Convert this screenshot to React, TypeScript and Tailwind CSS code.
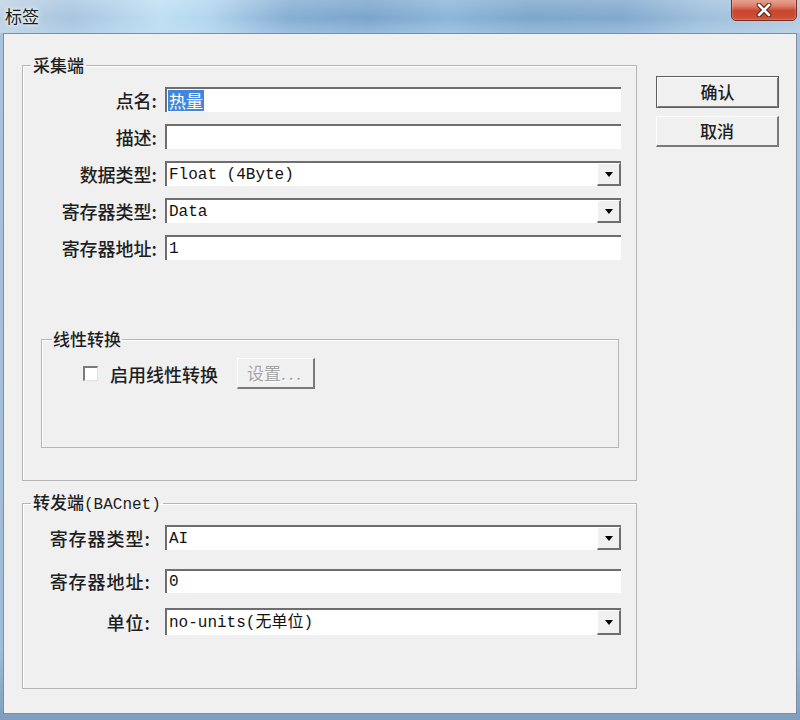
import React from "react";

const CJK = "font-['Noto_Sans_CJK_SC',sans-serif]";
const MONO = "font-['Liberation_Mono','Noto_Sans_CJK_SC',monospace]";

function Box({
  text,
  sel,
  drop,
}: {
  text?: string;
  sel?: string;
  drop?: boolean;
}) {
  return (
    <div className="flex h-full w-[456px] items-stretch border-t-2 border-l-2 border-t-[#6e6e6e] border-l-[#6e6e6e] bg-white">
      <div className={`flex flex-1 items-center pl-[1px] text-[16px] text-[#111] ${MONO}`}>
        {sel ? (
          <span className={`bg-[#3f86dc] px-[1px] text-[17px] leading-[21px] text-white ${CJK}`}>{sel}</span>
        ) : (
          <span className="pl-[1px]">{text}</span>
        )}
      </div>
      {drop && (
        <div className="flex w-[24px] items-center justify-center border-t border-l border-r-2 border-b-2 border-t-white border-l-white border-r-[#6e6e6e] border-b-[#6e6e6e] bg-[#f0f0f0]">
          <div className="h-0 w-0 border-x-[4px] border-t-[5px] border-x-transparent border-t-black" />
        </div>
      )}
    </div>
  );
}

function Row({
  label,
  h = "h-[25px]",
  extra = "",
  children,
}: {
  label: string;
  h?: string;
  extra?: string;
  children: React.ReactNode;
}) {
  return (
    <div className={`flex items-center ${h} ${extra}`}>
      <div className={`w-[134px] text-right text-[18px] font-medium leading-none text-[#1e1e1e] ${CJK}`}>{label}</div>
      <div className="ml-[8px] h-full">{children}</div>
    </div>
  );
}

function Row2({
  label,
  h = "h-[25px]",
  extra = "",
  children,
}: {
  label: string;
  h?: string;
  extra?: string;
  children: React.ReactNode;
}) {
  return (
    <div className={`flex items-center ${h} ${extra}`}>
      <div className={`w-[134px] pr-[6px] text-right text-[18px] font-medium leading-none tracking-[1px] text-[#1e1e1e] ${CJK}`}>{label}</div>
      <div className="ml-[8px] h-full">{children}</div>
    </div>
  );
}

export default function App() {
  return (
    <div className={`relative flex h-[720px] w-[800px] flex-col overflow-hidden bg-[linear-gradient(180deg,#a9c4dc_0%,#9fbcd8_90%,#7f9dbd_100%)] ${CJK}`}>
      {/* title bar */}
      <div className="relative h-[33px] shrink-0 bg-[linear-gradient(180deg,rgba(255,255,255,0.18)_0%,rgba(255,255,255,0)_55%,rgba(200,225,245,0.35)_100%),linear-gradient(90deg,#bfd2e3_0%,#a7c6e0_9%,#bfdff3_20%,#b3d6ee_26%,#86aed3_36%,#7ba5cc_46%,#8db5d8_56%,#7ea6cb_66%,#82a9ce_78%,#9fc0dc_88%,#b3cbe0_100%)]">
        <div className="pl-[5px] pt-[5px] text-[17px] leading-[22px] text-[#1a1a1a] [text-shadow:0_0_6px_#ffffff,0_0_3px_#ffffff]">
          标签
        </div>
        <div className="absolute right-[3px] top-[-4px] flex h-[25px] w-[66px] items-center justify-center rounded-b-[5px] border border-[#7a2e22] bg-[linear-gradient(180deg,#eab3a4_0%,#dc7d68_40%,#c9442c_60%,#d0533a_100%)] shadow-[inset_0_0_2px_rgba(255,255,255,0.6)]">
          <svg width="16" height="14" viewBox="0 0 16 14" className="mt-[2px]">
            <path d="M3 2 L13 12 M13 2 L3 12" stroke="#5a2118" strokeWidth="4.6" strokeLinecap="round" />
            <path d="M3 2 L13 12 M13 2 L3 12" stroke="#ffffff" strokeWidth="2.6" strokeLinecap="round" />
          </svg>
        </div>
      </div>

      {/* client area */}
      <div className="mx-[3px] flex h-[681px] shrink-0 border border-[#7c8ea2] bg-[#f0f0f0] pl-[18px]">
        {/* left column */}
        <div className="flex w-[615px] flex-col">
          {/* 采集端 */}
          <fieldset className="mt-[22px] h-[425px] border border-[#b5b5b5] p-0 shadow-[inset_1px_1px_0_#ffffff]">
            <legend className="ml-[8px] px-[2px] text-[17px] font-medium leading-[18px] text-[#1e1e1e]">采集端</legend>
            <div className="flex flex-col gap-[12px] pt-[13px]">
              <Row label="点名:">
                <Box sel="热量" />
              </Row>
              <Row label="描述:">
                <Box text="" />
              </Row>
              <Row label="数据类型:">
                <Box text="Float (4Byte)" drop />
              </Row>
              <Row label="寄存器类型:">
                <Box text="Data" drop />
              </Row>
              <Row label="寄存器地址:">
                <Box text="1" />
              </Row>
            </div>

            {/* 线性转换 */}
            <fieldset className="ml-[18px] mt-[70px] h-[118px] w-[578px] border border-[#b5b5b5] p-0 shadow-[inset_1px_1px_0_#ffffff]">
              <legend className="ml-[10px] px-[1px] text-[17px] font-medium leading-[18px] text-[#1e1e1e]">线性转换</legend>
              <div className="mt-[10px] flex h-[31px] items-center pl-[41px]">
                <div className="h-[15px] w-[15px] border-t-2 border-l-2 border-r border-b border-t-[#7a7a7a] border-l-[#7a7a7a] border-r-[#e2e2e2] border-b-[#e2e2e2] bg-white" />
                <div className="ml-[12px] text-[18px] font-medium leading-none text-[#1e1e1e]">启用线性转换</div>
                <div className="ml-[19px] flex h-[31px] w-[78px] items-center justify-center border-t border-l border-r-2 border-b-2 border-t-white border-l-white border-r-[#7a7a7a] border-b-[#7a7a7a] bg-[#f0f0f0] text-[17px] text-[#a3a3a3] [text-shadow:1px_1px_0_#ffffff]">
                  设置<span className="tracking-[3px]">...</span>
                </div>
              </div>
            </fieldset>
          </fieldset>

          {/* 转发端 */}
          <fieldset className="mt-[12px] h-[196px] border border-[#b5b5b5] p-0 shadow-[inset_1px_1px_0_#ffffff]">
            <legend className="ml-[8px] px-[2px] text-[17px] font-medium leading-[18px] text-[#1e1e1e]">
              转发端<span className={`text-[16px] font-normal ${MONO}`}>(BACnet)</span>
            </legend>
            <div className="flex flex-col pt-[11px]">
              <Row2 label="寄存器类型:">
                <Box text="AI" drop />
              </Row2>
              <Row2 label="寄存器地址:" h="h-[24px]" extra="mt-[19px]">
                <Box text="0" />
              </Row2>
              <Row2 label="单位:" h="h-[27px]" extra="mt-[15px]">
                <Box text="no-units(无单位)" drop />
              </Row2>
            </div>
          </fieldset>
        </div>

        {/* right column */}
        <div className="ml-[19px] flex flex-col pt-[42px]">
          <div className="flex h-[32px] w-[123px] items-center justify-center border border-[#5e5e5e] bg-[#f0f0f0] text-[17px] font-medium text-[#1e1e1e] shadow-[inset_1px_1px_0_#ffffff,inset_-1px_-1px_0_#7a7a7a]">
            确认
          </div>
          <div className="mt-[8px] flex h-[31px] w-[123px] items-center justify-center border-t border-l border-r-2 border-b-2 border-t-white border-l-white border-r-[#7a7a7a] border-b-[#7a7a7a] bg-[#f0f0f0] text-[17px] font-medium text-[#1e1e1e]">
            取消
          </div>
        </div>
      </div>
    </div>
  );
}
